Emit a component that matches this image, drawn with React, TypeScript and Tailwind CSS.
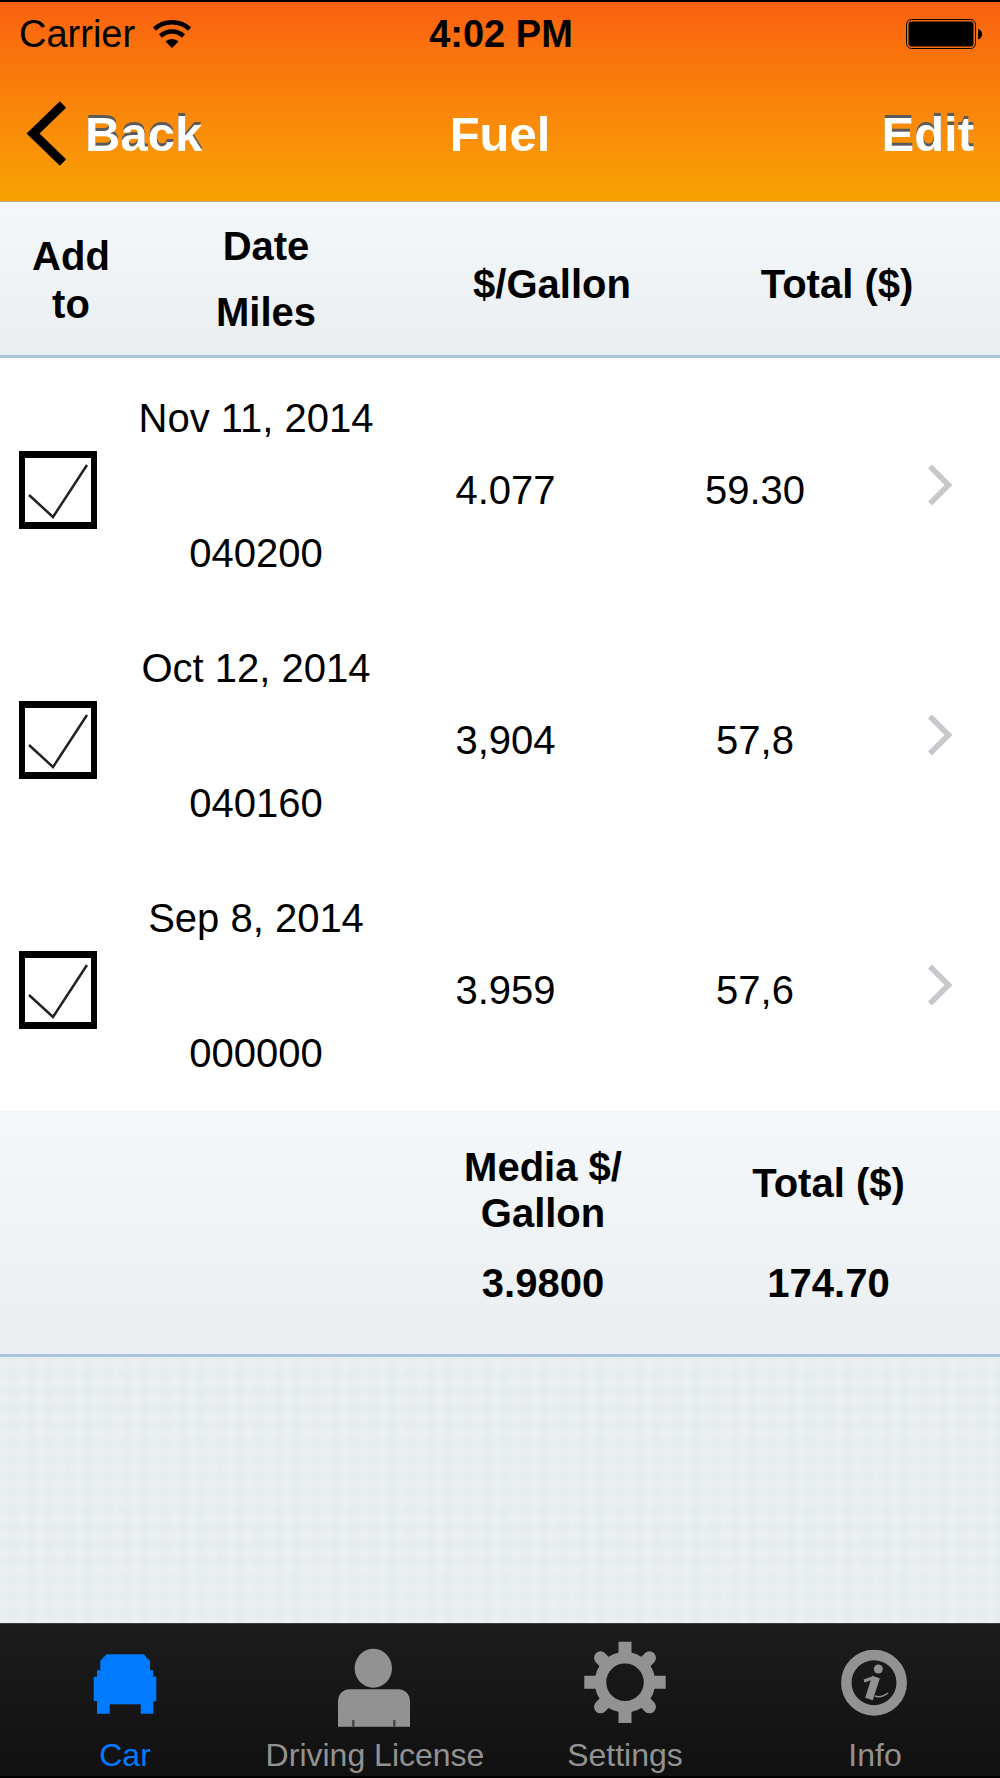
import React, { useState } from 'react';

interface FuelEntry {
  id: number;
  date: string;
  miles: string;
  price: string;
  total: string;
  included: boolean;
}

const INITIAL_ENTRIES: FuelEntry[] = [
  { id: 1, date: 'Nov 11, 2014', miles: '040200', price: '4.077', total: '59.30', included: true },
  { id: 2, date: 'Oct 12, 2014', miles: '040160', price: '3,904', total: '57,8', included: true },
  { id: 3, date: 'Sep 8, 2014', miles: '000000', price: '3.959', total: '57,6', included: true },
];

const WifiIcon = () => (
  <svg width="38" height="28" viewBox="0 0 38 28" fill="none" stroke="black" strokeWidth="4.5" aria-hidden="true">
    <path d="M1.5 9C11 0 27 0 36.5 9" />
    <path d="M7.5 16C14 10 24 10 30.5 16" />
    <path d="M12.5 21.500C16 18 22 18 25.5 21.500L19 28Z" fill="black" stroke="none" />
  </svg>
);

const BatteryIcon = () => (
  <svg width="77" height="31" viewBox="0 0 77 31" aria-hidden="true">
    <rect x="0.5" y="0.5" width="69" height="29" rx="5" fill="none" stroke="black" />
    <rect x="2.5" y="2.5" width="65" height="25" rx="3" fill="black" />
    <path d="M72 10C77.5 11 77.5 19.5 72 20.5Z" fill="black" />
  </svg>
);

const CarIcon = () => (
  <svg width="84" height="84" viewBox="0 0 84 84" fill="currentColor" aria-hidden="true">
    <path d="M23.7 13.3H61L63.7 16.7L67 19.7V29.3H70.3V35.7H73.3V60L70.3 60.7V72.7H57.7V63.3H26.7V72.7H14V60H10.7V35.7H14V29.3H17.3V19.7Z" />
  </svg>
);

const PersonIcon = () => (
  <svg width="84" height="84" viewBox="0 0 84 84" fill="currentColor" className="overflow-visible" aria-hidden="true">
    <ellipse cx="40.3" cy="27.3" rx="18.7" ry="19.5" />
    <path d="M5 85.7V61C5 53 10 48.3 17 48.3H65C72 48.3 77 53 77 61V85.7Z" />
    <path d="M20.3 79V85.7M61.3 79V85.7" stroke="#4a4a4a" strokeWidth="2.5" />
  </svg>
);

const GearIcon = () => (
  <svg width="84" height="84" viewBox="0 0 84 84" fill="none" stroke="currentColor" aria-hidden="true">
    <circle cx="42" cy="41.3" r="24.5" strokeWidth="11.5" />
    <path d="M42 0.7V16M42 66.7V82M1.3 41.3H16M68 41.3H82.7" strokeWidth="13" />
    <path d="M17.5 16.8L24 23.3M66.5 16.8L60 23.3M17.5 65.8L24 59.3M66.5 65.8L60 59.3" strokeWidth="13" strokeLinecap="round" />
  </svg>
);

const InfoIcon = () => (
  <svg width="84" height="84" viewBox="0 0 84 84" fill="none" stroke="currentColor" aria-hidden="true">
    <circle cx="41" cy="41.7" r="27.7" strokeWidth="10.5" />
    <circle cx="45.3" cy="28" r="4.5" fill="currentColor" stroke="none" />
    <path d="M43 36L36 58" strokeWidth="8" />
    <path d="M31 40L41 36.5" strokeWidth="3" />
    <path d="M42 55C47 57 51 55 55 52" strokeWidth="1.5" />
  </svg>
);

const TABS = [
  { label: 'Car', icon: CarIcon },
  { label: 'Driving License', icon: PersonIcon },
  { label: 'Settings', icon: GearIcon },
  { label: 'Info', icon: InfoIcon },
];

const App: React.FC = () => {
  const [entries, setEntries] = useState(INITIAL_ENTRIES);
  const [activeTab, setActiveTab] = useState('Car');

  const toggleEntry = (id: number) => {
    setEntries(prev => prev.map(e => (e.id === id ? { ...e, included: !e.included } : e)));
  };

  return (
    <div className="min-h-screen flex flex-col bg-white text-black font-['Liberation_Sans',Arial,sans-serif]">
      <header className="border-t-2 border-t-black border-b border-b-[#b5a58c] bg-linear-to-b from-[#f9600f] to-[#f8a202]">
        <div className="h-16 grid grid-cols-3 items-center pl-[19px] pr-[17px] text-[38px] leading-[48px]">
          <div className="flex items-center gap-[18px]">
            <span>Carrier</span>
            <WifiIcon />
          </div>
          <span className="text-center font-bold">4:02 PM</span>
          <div className="flex justify-end">
            <BatteryIcon />
          </div>
        </div>
        <div className="h-[135px] grid grid-cols-3 items-center px-[26px] text-[49px] leading-[56px] font-bold text-white">
          <button className="flex items-center gap-[18px] text-left [text-shadow:0_-3px_0_#5a5a5a]">
            <svg width="41" height="65" viewBox="0 0 41 65" fill="none" stroke="black" strokeWidth="9" aria-hidden="true">
              <path d="M37 3.5L7 32.5L37 61.5" />
            </svg>
            Back
          </button>
          <h1 className="text-center">Fuel</h1>
          <button className="justify-self-end [text-shadow:0_-3px_0_#5a5a5a]">Edit</button>
        </div>
      </header>

      <table className="block text-[40px] leading-[46px] text-center">
        <thead className="block border-b-3 border-[#a9c5da] bg-linear-to-b from-[#f4f8fb] to-[#ebeef1]">
          <tr className="grid grid-cols-[142fr_248fr_324fr_246fr] items-center h-[153px] pr-10">
            <th className="pt-[2px] leading-[48px]">Add<br />to</th>
            <th className="leading-[66px]">Date<br />Miles</th>
            <th className="pt-[10px]">$/Gallon</th>
            <th className="pt-[10px]">Total ($)</th>
          </tr>
        </thead>
        <tbody className="block pt-[2px] pb-px">
          {entries.map(entry => (
            <tr key={entry.id} className="grid grid-cols-[115fr_282fr_217fr_282fr_88fr] items-center h-[250px] pr-4">
              <td className="pt-[10px] flex justify-center">
                <label className="grid">
                  <input
                    type="checkbox"
                    checked={entry.included}
                    onChange={() => toggleEntry(entry.id)}
                    aria-label={`Add ${entry.date} to total`}
                    className="peer col-start-1 row-start-1 appearance-none size-[78px] border-x-6 border-y-7 border-black bg-white"
                  />
                  <svg viewBox="0 0 78 78" fill="none" stroke="#222" strokeWidth="2.5" className="col-start-1 row-start-1 size-[78px] invisible peer-checked:visible pointer-events-none" aria-hidden="true">
                    <path d="M10 44L34 66L68 14" />
                  </svg>
                </label>
              </td>
              <td className="flex flex-col gap-[89px]">
                <span>{entry.date}</span>
                <span>{entry.miles}</span>
              </td>
              <td className="pt-[10px]">{entry.price}</td>
              <td className="pt-[10px]">{entry.total}</td>
              <td className="flex justify-center">
                <button aria-label={`Open ${entry.date}`}>
                  <svg width="24" height="42" viewBox="0 0 24 42" fill="none" stroke="#c7c7cc" strokeWidth="5.5" aria-hidden="true">
                    <path d="M2 2.5L20.5 21L2 39.5" />
                  </svg>
                </button>
              </td>
            </tr>
          ))}
        </tbody>
        <tfoot className="block pt-[33px] pb-12 border-b-3 border-[#a9c5da] bg-linear-to-b from-[#f4f8fb] to-[#ebeef1] font-bold">
          <tr className="grid grid-cols-[389fr_308fr_263fr] items-center pr-10">
            <td />
            <th>Media $/<br />Gallon</th>
            <th className="pb-[14px]">Total ($)</th>
          </tr>
          <tr className="grid grid-cols-[389fr_308fr_263fr] items-center pt-6 pr-10">
            <td />
            <td>3.9800</td>
            <td>174.70</td>
          </tr>
        </tfoot>
      </table>

      {/* Linen backdrop */}
      <div className="flex-1 bg-[#e9eef1] bg-[repeating-linear-gradient(90deg,#ffffff18_0px,#ffffff00_7px,#b4bec80c_11px,#ffffff00_19px),repeating-linear-gradient(0deg,#ffffff18_0px,#ffffff00_6px,#b4bec80c_10px,#ffffff00_17px)]" />

      <nav className="grid grid-cols-4 border-t border-t-[#3a3a3a] border-b-2 border-b-black bg-linear-to-b from-[#1c1c1c] to-[#111111]">
        {TABS.map(({ label, icon: Icon }) => (
          <a
            key={label}
            href="#"
            onClick={(e) => { e.preventDefault(); setActiveTab(label); }}
            className={`flex flex-col items-center gap-[14px] pt-[17px] pb-[5px] text-[32px] leading-8 ${activeTab === label ? 'text-[#007aff]' : 'text-[#929292]'}`}
          >
            <Icon />
            <span>{label}</span>
          </a>
        ))}
      </nav>
    </div>
  );
};

export default App;
